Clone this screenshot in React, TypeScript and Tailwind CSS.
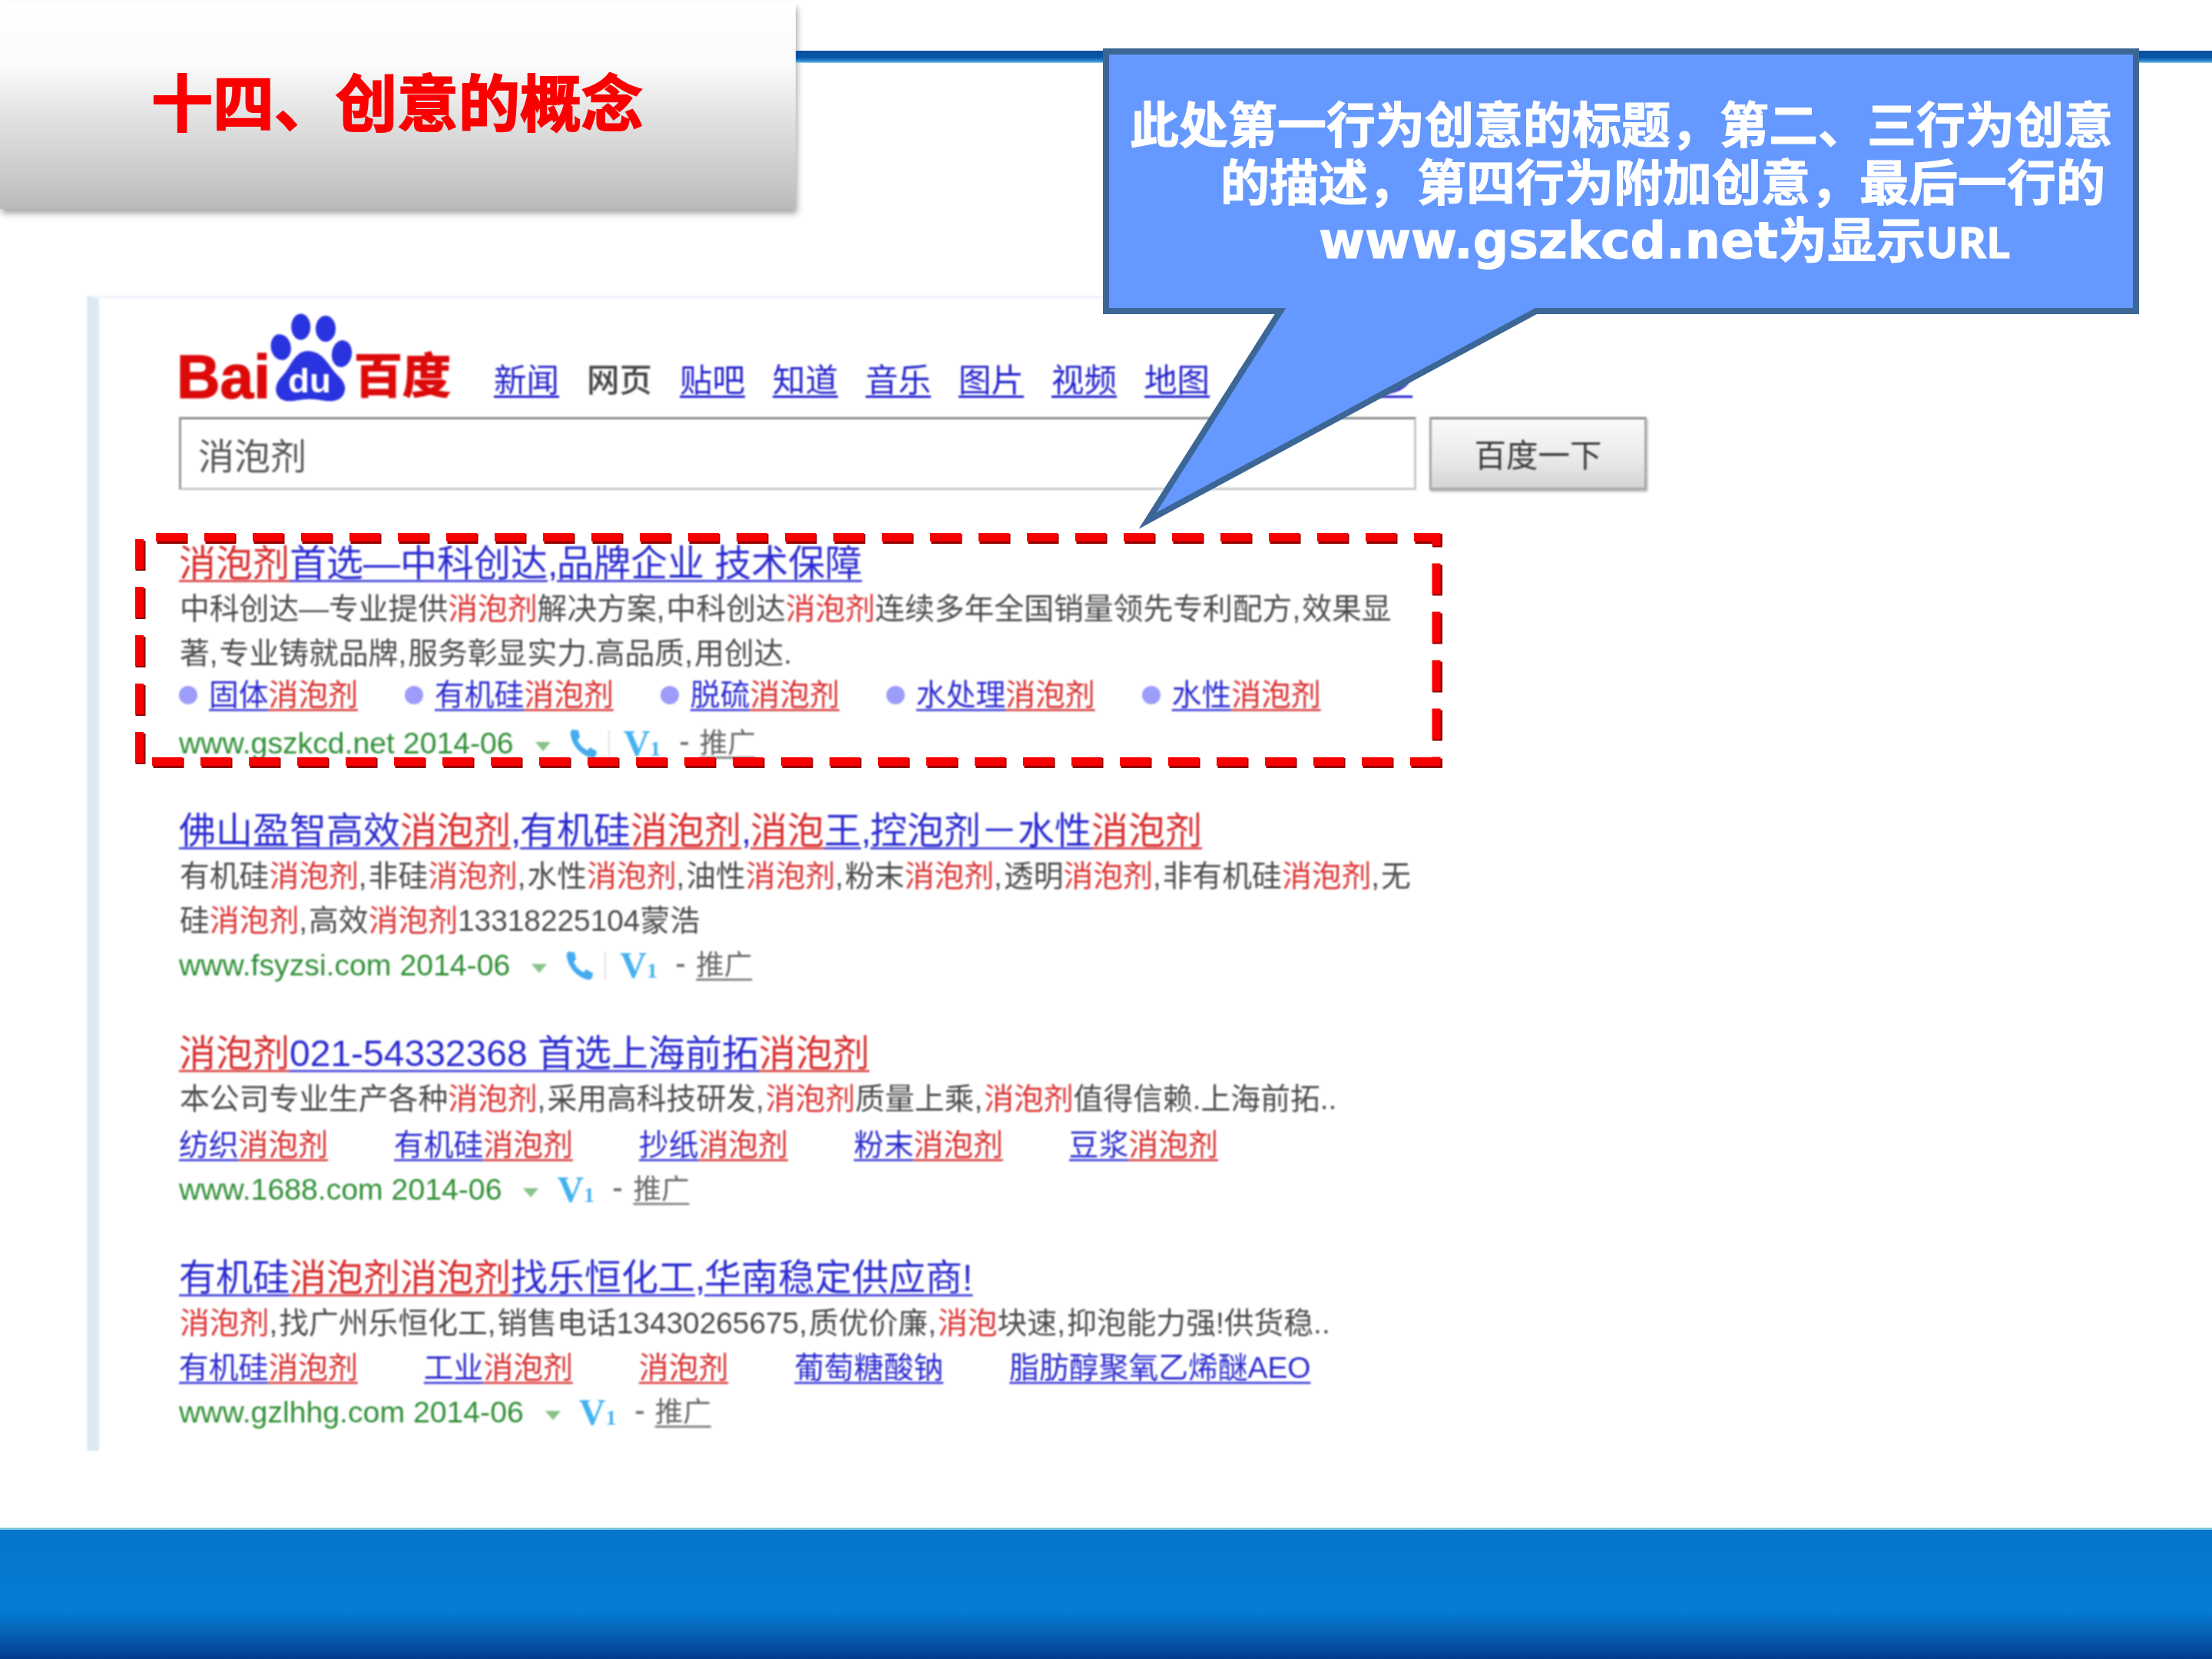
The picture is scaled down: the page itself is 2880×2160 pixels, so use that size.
import React from 'react';

const CJK = '[font-family:"Liberation_Sans","Noto_Sans_CJK_SC",sans-serif]';

// splits a line on the search keyword, keyword parts go red
const Rich = ({ text, base, hot, comma }: { text: string; base: string; hot: string; comma?: string }) => {
  const parts = text.split(/(消泡剂|消泡)/);
  return (
    <>
      {parts.map((p, i) =>
        p === '' ? null : (
          <span key={i} className={/^消泡/.test(p) ? hot : base}>
            {p.split(/(,)/).map((c, j) =>
              c === ',' ? (
                <span key={j} className={`inline-block ${comma ?? ''}`}>,</span>
              ) : (
                <React.Fragment key={j}>{c}</React.Fragment>
              ),
            )}
          </span>
        ),
      )}
    </>
  );
};

const linkBlue = 'text-[#2a2ad0] underline decoration-[#4f4fdc] decoration-[3px] underline-offset-[5px] [text-decoration-skip-ink:none]';
const linkRed = 'text-[#d92b2b] underline decoration-[#dc5050] decoration-[3px] underline-offset-[5px] [text-decoration-skip-ink:none]';

const Title = ({ text }: { text: string }) => (
  <div className="h-[60px] flex items-center whitespace-nowrap text-[48px] leading-none">
    <span>
      <Rich text={text} base={linkBlue} hot={linkRed} comma="w-[0.25em]" />
    </span>
  </div>
);

const Desc = ({ text }: { text: string }) => (
  <div className="h-[58px] flex items-center whitespace-nowrap text-[38.8px] leading-none pl-[1px]">
    <span>
      <Rich text={text} base="text-[#4a4a4a]" hot="text-[#dc2f2f]" comma="w-[0.33em]" />
    </span>
  </div>
);

const SiteLinks = ({ links, gap, bullets }: { links: string[]; gap: string; bullets?: boolean }) => (
  <div className={`h-[58px] flex items-center whitespace-nowrap text-[38.8px] leading-none ${gap}`}>
    {links.map((l) => (
      <div key={l} className="flex items-center">
        {bullets && <span className="w-[24px] h-[24px] rounded-full bg-[#9c9cfa] mr-[15px]" />}
        <span>
          <Rich text={l} base={linkBlue} hot={linkRed} />
        </span>
      </div>
    ))}
  </div>
);

const Phone = () => (
  <svg viewBox="0 0 36 37" className="w-[36px] h-[37px] text-[#45abee]" fill="currentColor">
    <path d="M5 0 L12 1 L14 10 L11 13 C13 19 18 24 24 27 L27 23 L36 28 L35 34 C33 37 30 37 27 36 C14 32 4 20 2 7 C1 3 3 0 5 0Z" />
  </svg>
);

const UrlRow = ({ url, phone }: { url: string; phone?: boolean }) => (
  <div className="h-[58px] flex items-center whitespace-nowrap">
    <span className="text-[39.2px] leading-none text-[#2f8f35]">{url} 2014-06</span>
    <svg viewBox="0 0 20 12" className="w-[20px] h-[12px] ml-[28px] mt-[8px] text-[#86c48a]" fill="currentColor">
      <path d="M0 0 H20 L10 12Z" />
    </svg>
    {phone && (
      <div className="flex items-center ml-[24px]">
        <Phone />
        <span className="w-[2px] h-[36px] bg-[#e2e2e2] ml-[15px] mr-[-6px]" />
      </div>
    )}
    <span className="ml-[24px] flex items-baseline w-[50px] text-[#45b2f0] font-bold [font-family:'Liberation_Serif',serif] leading-none">
      <span className="text-[48px]">V</span>
      <span className="text-[28px]">1</span>
    </span>
    <span className="ml-[24px] w-[10px] h-[4px] bg-[#777]" />
    <span className="ml-[15px] text-[36.5px] leading-none text-[#666] underline decoration-[3px] decoration-[#888] underline-offset-[5px] [text-decoration-skip-ink:none]">
      推广
    </span>
  </div>
);

const navItems = ['新闻', '网页', '贴吧', '知道', '音乐', '图片', '视频', '地图', '文库'];
const navLink = 'text-[#2222cc] underline decoration-[3px] underline-offset-[5px] [text-decoration-skip-ink:none]';

// red dashed frame drawn around the first ad
const framePath = 'M203 699.5 H1870 V991.5 H181.5';
const frameLeft = 'M181.5 993 V702';

export default function App() {
  return (
    <div className="relative w-[2880px] h-[2160px] flex flex-col overflow-hidden bg-white [font-family:'Noto_Sans_CJK_SC',sans-serif]">
      {/* header */}
      <div className="h-[385px] flex items-start">
        <div className="w-[1036px] h-[268px] mt-[4px] shrink-0 flex items-start pl-[197px] pt-[80px] bg-[linear-gradient(180deg,#ffffff_0%,#fbfbfb_30%,#e2e2e2_55%,#c9c9c9_85%,#b9b9b9_100%)] shadow-[2px_6px_8px_rgba(0,0,0,0.35)]">
          <span className="text-[80px] leading-[90px] font-bold text-[#fb0000] whitespace-nowrap [-webkit-text-stroke:2px_#fb0000]">十四、创意的概念</span>
        </div>
        <div className="flex-1 h-[16px] mt-[66px] bg-[linear-gradient(180deg,#0a4f9f_0%,#0a55a8_55%,#2f8fd0_85%,#9fd4ea_100%)]" />
      </div>

      {/* search page shot */}
      <div className="h-[1504px] w-[2100px] ml-[113px] pl-[104px] pt-[22px] border-l-[16px] border-l-[#dce9f2] border-t-[4px] border-t-[#f0f6fa] blur-[1px]">
        <div className="flex items-end h-[114px]">
          <svg viewBox="0 0 352 114" className="w-[352px] h-[114px] shrink-0 overflow-visible">
            <text x="-3" y="107" fontSize="80" fontWeight="700" fontFamily="Liberation Sans" fill="#dd0a0a" stroke="#dd0a0a" strokeWidth="1.5" textLength="122" lengthAdjust="spacingAndGlyphs">Bai</text>
            <g fill="#2a33e0" transform="translate(0 -2)">
              <ellipse cx="158.7" cy="16.5" rx="12.5" ry="17" />
              <ellipse cx="191" cy="19" rx="13" ry="17" />
              <ellipse cx="132.7" cy="43" rx="13" ry="17" transform="rotate(-12 132.7 43)" />
              <ellipse cx="212" cy="51.5" rx="13" ry="17.5" transform="rotate(8 212 51.5)" />
              <path d="M168 48 C150 48 145 70 135 80 C125 90 125 100 128 105 C133 115 145 114 155 112 C165 110 175 110 185 112 C195 114 208 115 214 105 C219 95 215 87 205 78 C195 68 188 48 168 48Z" />
            </g>
            <text x="142" y="100" fontSize="44" fontWeight="700" fontFamily="Liberation Sans" fill="#fff" textLength="56" lengthAdjust="spacingAndGlyphs">du</text>
            <text x="228" y="101" fontSize="62" fontWeight="700" fontFamily="Noto Sans CJK SC" fill="#dd0a0a" stroke="#dd0a0a" strokeWidth="1.5" textLength="126" lengthAdjust="spacingAndGlyphs">百度</text>
          </svg>
          <div className="flex gap-[36px] ml-[58px] mb-[12px] text-[42.5px] leading-none">
            {navItems.map((n) => (
              <span key={n} className={n === '网页' ? 'text-[#444] font-medium' : navLink}>
                {n}
              </span>
            ))}
            <span className={`ml-[22px] ${navLink}`}>更多</span>
          </div>
        </div>

        <div className="flex gap-[17px] mt-[18px]">
          <div className="w-[1611px] h-[95px] shrink-0 flex items-center pl-[22px] text-[47px] leading-none text-[#555] border-[3px] border-[#c9c9c9] border-t-[#888] border-l-[#999]">
            消泡剂
          </div>
          <div className="w-[283px] h-[95px] shrink-0 flex items-center justify-center text-[41.5px] leading-none text-[#3a3a3a] border-[3px] border-[#a8a8a8] border-t-[#8a8a8a] bg-[linear-gradient(180deg,#fafafa_0%,#e9e9e9_60%,#d4d4d4_100%)] shadow-[1px_2px_3px_rgba(0,0,0,0.3)]">
            百度一下
          </div>
        </div>

        <div className={`flex flex-col mt-[66px] ${CJK}`}>
          {/* result 1 */}
          <Title text="消泡剂首选—中科创达,品牌企业 技术保障" />
          <Desc text="中科创达—专业提供消泡剂解决方案,中科创达消泡剂连续多年全国销量领先专利配方,效果显" />
          <Desc text="著,专业铸就品牌,服务彰显实力.高品质,用创达." />
          <div className="-mt-[4px]">
            <SiteLinks bullets gap="gap-[61px]" links={['固体消泡剂', '有机硅消泡剂', '脱硫消泡剂', '水处理消泡剂', '水性消泡剂']} />
          </div>
          <div className="mt-[5px] mb-[55px]">
            <UrlRow url="www.gszkcd.net" phone />
          </div>

          {/* result 2 */}
          <Title text="佛山盈智高效消泡剂,有机硅消泡剂,消泡王,控泡剂－水性消泡剂" />
          <Desc text="有机硅消泡剂,非硅消泡剂,水性消泡剂,油性消泡剂,粉末消泡剂,透明消泡剂,非有机硅消泡剂,无" />
          <Desc text="硅消泡剂,高效消泡剂13318225104蒙浩" />
          <div className="mb-[56px]">
            <UrlRow url="www.fsyzsi.com" phone />
          </div>

          {/* result 3 */}
          <Title text="消泡剂021-54332368 首选上海前拓消泡剂" />
          <Desc text="本公司专业生产各种消泡剂,采用高科技研发,消泡剂质量上乘,消泡剂值得信赖.上海前拓.." />
          <div className="mt-[2px]">
            <SiteLinks gap="gap-[86px]" links={['纺织消泡剂', '有机硅消泡剂', '抄纸消泡剂', '粉末消泡剂', '豆浆消泡剂']} />
          </div>
          <div className="mb-[56px]">
            <UrlRow url="www.1688.com" />
          </div>

          {/* result 4 */}
          <Title text="有机硅消泡剂消泡剂找乐恒化工,华南稳定供应商!" />
          <Desc text="消泡剂,找广州乐恒化工,销售电话13430265675,质优价廉,消泡块速,抑泡能力强!供货稳.." />
          <SiteLinks gap="gap-[86px]" links={['有机硅消泡剂', '工业消泡剂', '消泡剂', '葡萄糖酸钠', '脂肪醇聚氧乙烯醚AEO']} />
          <UrlRow url="www.gzlhhg.com" />
        </div>
      </div>

      <div className="h-[100px]" />

      {/* footer */}
      <div className="h-[171px] border-t-[3px] border-t-[#7cc4e0] bg-[linear-gradient(180deg,#0676c9_0%,#067cd4_62%,#0568bb_76%,#054fa3_90%,#033c8c_100%)]" />

      {/* red frame over the first ad */}
      <svg viewBox="0 0 2880 2160" className="absolute left-0 top-0 w-[2880px] h-[2160px] pointer-events-none" fill="none">
        <g stroke="#8f0000" strokeWidth="13" strokeDasharray="40 23" transform="translate(1.5 2)">
          <path d={framePath} />
          <path d={frameLeft} />
        </g>
        <g stroke="#f70000" strokeWidth="11" strokeDasharray="40 23">
          <path d={framePath} />
          <path d={frameLeft} />
        </g>
      </svg>

      {/* callout */}
      <svg viewBox="0 0 2880 2160" className="absolute left-0 top-0 w-[2880px] h-[2160px] pointer-events-none">
        <path d="M1440 67 H2781 V405 H2000 L1494 678 L1667 405 H1440Z" fill="#6699ff" stroke="#3c6695" strokeWidth="8" strokeLinejoin="miter" strokeMiterlimit="10" />
      </svg>
      <div className="absolute left-[1436px] top-[121px] flex flex-col text-white font-bold text-[64px] leading-[75px] whitespace-nowrap [-webkit-text-stroke:1px_#ffffff]">
        <div className="pl-[35px]">此处第一行为创意的标题，第二、三行为创意</div>
        <div className="pl-[153px]">的描述，第四行为附加创意，最后一行的</div>
        <div className="pl-[281px] flex items-baseline">
          <span className="[font-family:'DejaVu_Sans',sans-serif] text-[65px]">www.gszkcd.net</span>
          <span>为显示</span>
          <span className="[font-family:'Noto_Sans',sans-serif] text-[56px]">URL</span>
        </div>
      </div>
    </div>
  );
}
